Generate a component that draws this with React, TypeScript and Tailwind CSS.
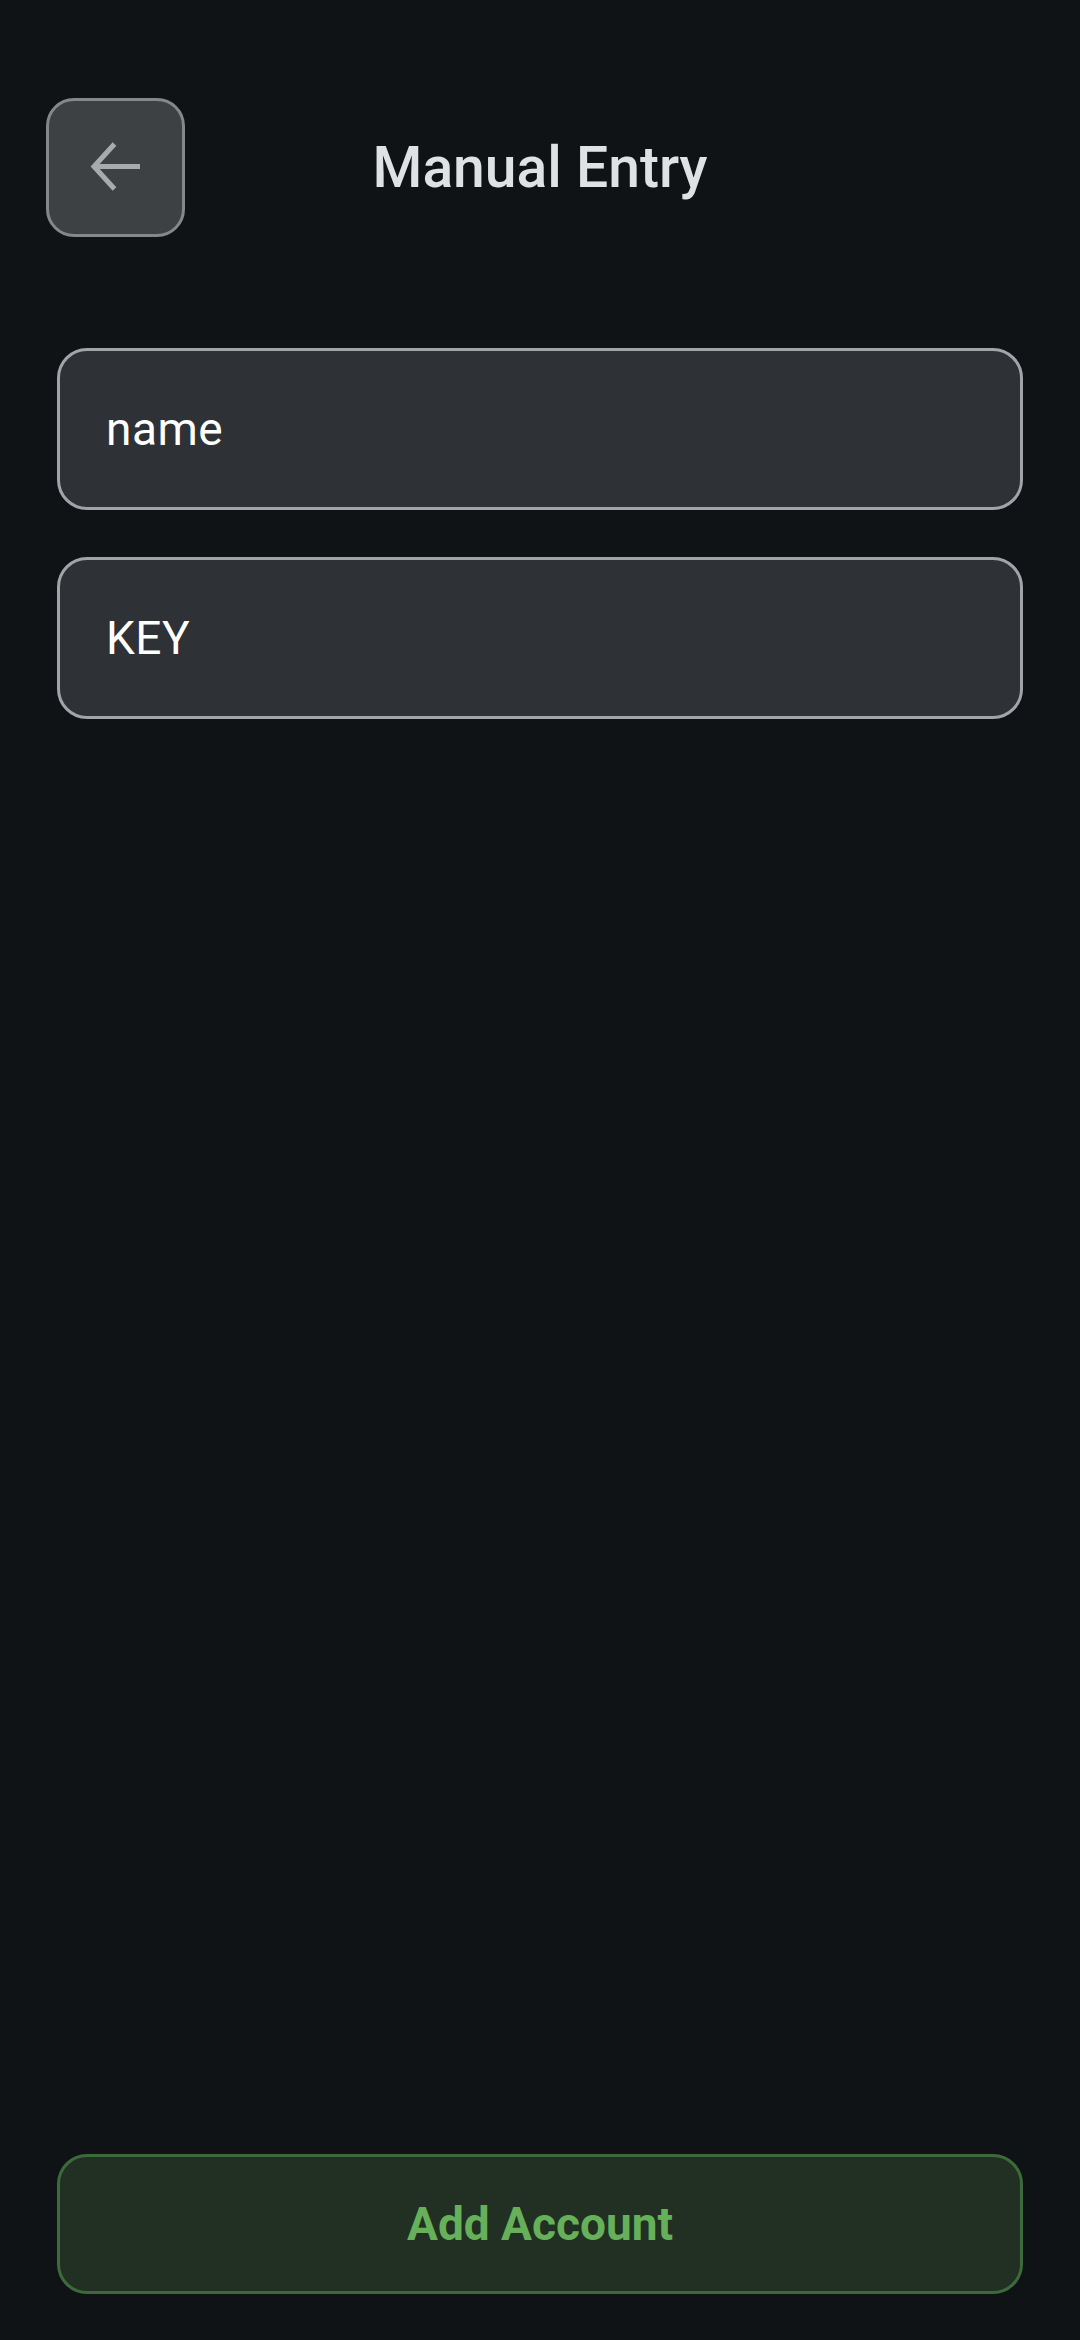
import React, { useState } from 'react';

export default function App() {
  const [name, setName] = useState('');
  const [key, setKey] = useState('');

  return (
    <div
      className="flex h-[2340px] w-[1080px] flex-col bg-[#101316] text-white"
      style={{ fontFamily: 'Roboto, "Noto Sans", sans-serif' }}
    >
      {/* Header */}
      <div className="mt-[98px] grid grid-cols-[139px_1fr_139px] items-center px-[46px]">
        <button className="flex h-[139px] w-[139px] items-center justify-center rounded-[28px] border-[3px] border-[#85878a] bg-[#3e4144]">
          <svg width="52" height="52" viewBox="0 0 52 52" fill="none">
            <path
              d="M50 24.5H4M24.5 2L4 24.5L24.5 47"
              stroke="#a9aaac"
              strokeWidth="5"
              strokeLinecap="butt"
              strokeLinejoin="miter"
            />
          </svg>
        </button>
        <h1 className="text-center text-[57px] font-medium leading-none text-[#dfe2e5]">Manual Entry</h1>
        <div />
      </div>

      {/* Fields */}
      <div className="mt-[111px] flex flex-col gap-[47px] px-[57px]">
        <input
          value={name}
          onChange={(e) => setName(e.target.value)}
          placeholder="name"
          className="h-[162px] w-full rounded-[30px] border-[3px] border-[#a2a4a7] bg-[#2e3135] px-[46px] text-[46px] tracking-[0.5px] text-white outline-none placeholder:text-white"
        />
        <input
          value={key}
          onChange={(e) => setKey(e.target.value)}
          placeholder="KEY"
          className="h-[162px] w-full rounded-[30px] border-[3px] border-[#a2a4a7] bg-[#2e3135] px-[46px] text-[46px] tracking-[0.5px] text-white outline-none placeholder:text-white"
        />
      </div>

      <div className="flex-1" />

      {/* Submit */}
      <div className="mb-[46px] px-[57px]">
        <button className="h-[140px] w-full rounded-[30px] border-[3px] border-[#3d6a3b] bg-[#213023] text-[46px] font-bold text-[#66b05a]">
          Add Account
        </button>
      </div>
    </div>
  );
}
